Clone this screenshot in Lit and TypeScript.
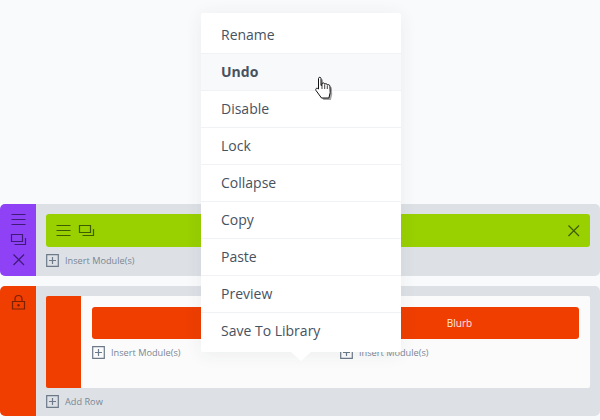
import { LitElement, html, css, svg } from "lit";
import { customElement } from "lit/decorators.js";

const menuItems = ["Rename", "Undo", "Disable", "Lock", "Collapse", "Copy", "Paste", "Preview", "Save To Library"];

const burger = svg`<path d="M2.500 4.500h14M2.500 9.500h14M2.500 14.500h14" fill="none" stroke="currentColor" stroke-width="1.2"/>`;
const dup = svg`<path d="M2.500 4.500h11v7h-11z M16.500 8v6.500h-11" fill="none" stroke="currentColor" stroke-width="1.2"/>`;
const cross = svg`<path d="M4.500 4.500l10.500 10.500M15 4.500l-10.500 10.500" fill="none" stroke="currentColor" stroke-width="1.2"/>`;
const lock = svg`<path d="M3.500 8.500h12v7.500h-12z M6 8.500V6a3.500 3.500 0 0 1 7 0v2.500" fill="none" stroke="currentColor" stroke-width="1.2"/><circle cx="9.500" cy="12.200" r="1.200" fill="currentColor"/>`;

@customElement("app-root")
export class AppRoot extends LitElement {
  static styles = css`
    :host { display: block; width: 600px; height: 420px; background: #f9fafb; font-family: "Open Sans", sans-serif; }
    .page { position: relative; width: 600px; height: 420px; padding-top: 204px; box-sizing: border-box; overflow: hidden; display: flex; flex-direction: column; gap: 10px; }
    .section { display: flex; }
    .s1 { height: 72px; }
    .s2 { height: 130px; }
    .handle { width: 36px; flex: none; display: flex; flex-direction: column; align-items: center; border-radius: 5px 0 0 5px; }
    .purple { background: #8f42f5; color: #3f1a78; padding-top: 6px; gap: 1px; }
    .orange { background: #ef3e00; color: #7c2000; padding-top: 7px; }
    .body { flex: 1; background: #dde1e6; border-radius: 0 5px 5px 0; padding: 10px 10px 0; }
    .icon { width: 19px; height: 19px; display: block; flex: none; }
    .green { height: 33px; background: #98d000; border-radius: 3px; color: #3f5c00; display: flex; align-items: center; padding: 0 7.5px; gap: 4px; }
    .spacer { flex: 1; }
    .ins { display: flex; align-items: center; gap: 6px; font-size: 9.2px; color: #7a8694; height: 14px; white-space: nowrap; }
    .plus { width: 13px; height: 13px; flex: none; display: block; color: #6b7989; }
    .s1 .ins { margin-top: 6px; }
    .content { display: flex; height: 92px; }
    .bar { width: 35px; background: #ef3e00; border-radius: 2px 0 0 2px; flex: none; }
    .panel { flex: 1; background: #fbfbfb; border-radius: 0 2px 2px 0; padding: 11px 11px 0 11px; display: grid; grid-template-columns: 236px 239px; column-gap: 12px; align-content: start; }
    .col { display: flex; flex-direction: column; gap: 6px; }
    .btn { height: 32px; background: #ef3e00; border-radius: 3px; color: #fde9e2; font-size: 10px; display: flex; align-items: center; justify-content: center; }
    .foot { margin-top: 6px; }
    .menu { position: absolute; left: 201px; top: 13px; width: 200px; height: 339px; background: #fff; border-radius: 2px; box-shadow: 0 2px 18px rgba(43, 55, 75, 0.07); display: flex; flex-direction: column; padding-top: 4px; box-sizing: border-box; }
    .menu::after { content: ""; position: absolute; left: 90px; top: 339px; border-style: solid; border-width: 9px 10px 0; border-color: #fff transparent transparent; }
    .item { height: 37px; flex: none; box-sizing: border-box; border-bottom: 1px solid #f0f2f5; padding: 0 0 1px 20px; display: flex; align-items: center; font-size: 14px; color: #47525f; }
    .item:last-child { border-bottom-color: transparent; }
    .item.on { background: #f7f9fb; font-weight: 700; }
    .hand { position: absolute; left: 313px; top: 75px; width: 22px; height: 27px; overflow: visible; }
  `;

  private insert(label: string, cls = "") {
    return html`<div class="ins ${cls}">
      <svg class="plus" viewBox="0 0 13 13"><path d="M.7.7h11.600v11.600H.7zM6.500 3v7M3 6.500h7" fill="none" stroke="currentColor" stroke-width="1.200"/></svg>
      ${label}
    </div>`;
  }

  render() {
    return html`<div class="page">
      <div class="section s1">
        <div class="handle purple">
          <svg class="icon" viewBox="0 0 19 19">${burger}</svg>
          <svg class="icon" viewBox="0 0 19 19">${dup}</svg>
          <svg class="icon" viewBox="0 0 19 19">${cross}</svg>
        </div>
        <div class="body">
          <div class="green">
            <svg class="icon" viewBox="0 0 19 19">${burger}</svg>
            <svg class="icon" viewBox="0 0 19 19">${dup}</svg>
            <div class="spacer"></div>
            <svg class="icon" viewBox="0 0 19 19">${cross}</svg>
          </div>
          ${this.insert("Insert Module(s)")}
        </div>
      </div>
      <div class="section s2">
        <div class="handle orange"><svg class="icon" viewBox="0 0 19 19">${lock}</svg></div>
        <div class="body">
          <div class="content">
            <div class="bar"></div>
            <div class="panel">
              <div class="col"><div class="btn"></div>${this.insert("Insert Module(s)")}</div>
              <div class="col"><div class="btn">Blurb</div>${this.insert("Insert Module(s)")}</div>
            </div>
          </div>
          ${this.insert("Add Row", "foot")}
        </div>
      </div>
      <div class="menu">
        ${menuItems.map((m) => html`<div class="item ${m === "Undo" ? "on" : ""}">${m}</div>`)}
      </div>
      <svg class="hand" viewBox="0 0 22 27">
        <path d="M5.500 3.500c0-1.600 2.500-1.600 2.500 0v7l1-.6V8.500c1.300-1 2.500-.6 2.700.6.900-.8 2.300-.5 2.600.8 1-.6 2.500-.1 2.600 1.200l.3 6.400-1.300 5.500H8.500L3 15.500c-1-1.500.6-3.200 2.500-1.500z" transform="translate(2 2)" fill="#000" opacity=".35"/>
        <path d="M5.500 3.500c0-1.600 2.500-1.600 2.500 0v7l1-.6V8.500c1.300-1 2.500-.6 2.700.6.900-.8 2.300-.5 2.600.8 1-.6 2.500-.1 2.600 1.200l.3 6.400-1.300 5.500H8.500L3 15.500c-1-1.500.6-3.200 2.500-1.500z" fill="#fff" stroke="#111" stroke-width="1"/>
        <path d="M9 10v4M11.700 9.500v4.500M14.300 10.500v3.500" stroke="#111" stroke-width=".8" fill="none"/>
      </svg>
    </div>`;
  }
}
